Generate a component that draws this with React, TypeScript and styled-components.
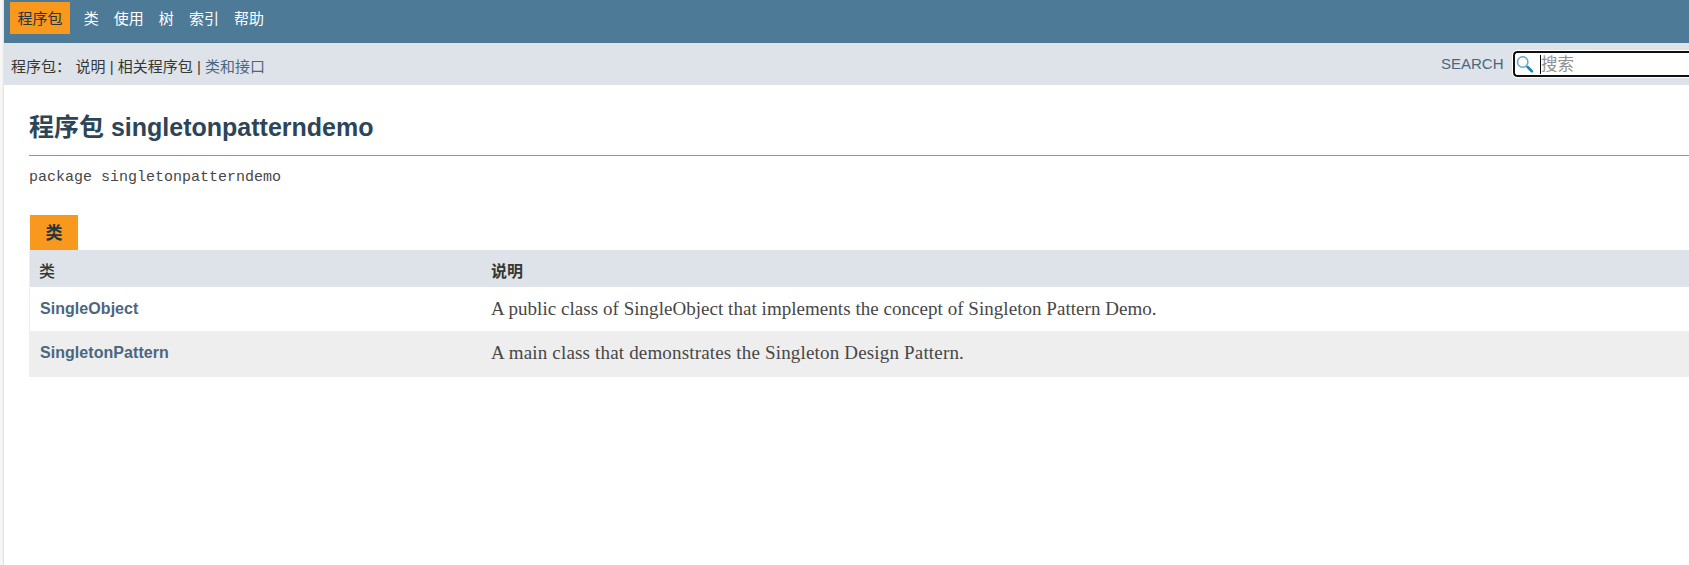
import React from "react";
import styled, { createGlobalStyle } from "styled-components";

const sans = `"Liberation Sans", "Noto Sans CJK SC", sans-serif`;

const GlobalStyle = createGlobalStyle`
  html, body { margin: 0; padding: 0; background: #fff; overflow: hidden; }
  * { box-sizing: border-box; }
  a { text-decoration: none; color: #4a6782; }
`;

const Page = styled.div`
  display: flex;
  width: 100vw;
  height: 100vh;
  overflow: hidden;
  font-family: ${sans};
  color: #353833;
`;

const Edge = styled.div`
  flex: 0 0 4px;
  background: linear-gradient(to right, #f7f7f7 0 2px, #ededed 3px, #dcdcdc 4px);
`;

const Main = styled.main`
  flex: 1;
  min-width: 0;
`;

const TopNav = styled.nav`
  display: flex;
  align-items: flex-start;
  gap: 15px;
  height: 43px;
  padding: 2px 0 0 6px;
  background: #4d7a97;
`;

const NavItem = styled.a<{ $active?: boolean }>`
  height: 32px;
  padding: ${(p) => (p.$active ? "0 7.5px" : "0")};
  margin-right: ${(p) => (p.$active ? "-1.2px" : "0")};
  background: ${(p) => (p.$active ? "#f8981d" : "transparent")};
  color: ${(p) => (p.$active ? "#253441" : "#fff")};
  font-size: 15px;
  line-height: 33px;
`;

const SubNav = styled.div`
  display: flex;
  justify-content: space-between;
  height: 42px;
  background: #dee3e9;
`;

const SubList = styled.div`
  display: flex;
  padding: 3px 0 0 7px;
  font-size: 15px;
  line-height: 42px;
  white-space: pre;
`;

const SubLabel = styled.span`
  width: 64.5px;
`;

const Search = styled.div`
  display: flex;
  flex: 0 0 248px;
  padding-top: 8px;
`;

const SearchLabel = styled.label`
  width: 72px;
  color: #4a6782;
  font-size: 15px;
  line-height: 26px;
`;

const SearchBox = styled.div`
  display: flex;
  align-items: center;
  flex: 1;
  height: 26px;
  padding-left: 1px;
  border: 2px solid #101010;
  border-right: 0;
  border-radius: 4px 0 0 4px;
  outline: 1px solid #fff;
  background: #fff;
`;

const Caret = styled.span`
  width: 1px;
  height: 19px;
  margin-left: 6px;
  background: #000;
`;

const Placeholder = styled.span`
  color: #909090;
  font-size: 16.5px;
  line-height: 20px;
  padding-bottom: 1px;
`;

const Content = styled.section`
  padding: 0 0 0 25px;
`;

const Title = styled.h1`
  height: 71px;
  margin: 0;
  padding-top: 24px;
  border-bottom: 1px solid #949494;
  color: #2c4557;
  font-size: 25px;
  line-height: 37px;
  font-weight: bold;
`;

const Signature = styled.div`
  height: 59px;
  padding-top: 12px;
  font-family: "Liberation Mono", monospace;
  font-size: 15px;
  line-height: 20px;
  color: #474747;
`;

const Caption = styled.div`
  width: 48px;
  height: 35px;
  margin-left: 1px;
  background: #f8981d;
  color: #253441;
  font-size: 17px;
  line-height: 37px;
  font-weight: bold;
  text-align: center;
`;

const Table = styled.div`
  border: solid #eee;
  border-width: 0 0 1px 1px;
`;

const Row = styled.div<{ $kind: "head" | "even" | "odd" }>`
  display: grid;
  grid-template-columns: 452px 1fr;
  height: ${(p) => ({ head: 37, even: 44, odd: 45 })[p.$kind]}px;
  padding-left: 9px;
  background: ${(p) => ({ head: "#dee3e9", even: "#fff", odd: "#eeeeee" })[p.$kind]};
  line-height: ${(p) => (p.$kind === "head" ? 43 : 44)}px;
  font-size: 16px;
`;

const HeadCell = styled.div<{ $strong?: boolean }>`
  font-weight: ${(p) => (p.$strong ? 700 : 500)};
`;

const ClassLink = styled.a`
  padding-left: 1px;
  font-weight: bold;
  font-size: 16px;
  letter-spacing: 0.05px;
`;

const Description = styled.div<{ $spacing: number }>`
  color: #474747;
  font-family: "Liberation Serif", serif;
  font-size: 19px;
  letter-spacing: ${(p) => p.$spacing}px;
  white-space: nowrap;
`;

const SearchIcon = () => (
  <svg width="18" height="18" viewBox="0 0 18 18" fill="none">
    <circle cx="6.7" cy="7" r="5.2" stroke="#62a9cb" strokeWidth="1.5" />
    <path d="M10.3 10.7l1.4 1.5" stroke="#62a9cb" strokeWidth="1.4" />
    <path d="M11.8 12.1l4 4.1" stroke="#1b83bd" strokeWidth="2.7" strokeLinecap="round" />
  </svg>
);

const classes = [
  {
    name: "SingleObject",
    text: "A public class of SingleObject that implements the concept of Singleton Pattern Demo.",
    spacing: 0.04,
  },
  {
    name: "SingletonPattern",
    text: "A main class that demonstrates the Singleton Design Pattern.",
    spacing: 0.17,
  },
];

export default function App() {
  return (
    <Page>
      <GlobalStyle />
      <Edge />
      <Main>
        <TopNav>
          <NavItem $active>程序包</NavItem>
          {["类", "使用", "树", "索引", "帮助"].map((t) => (
            <NavItem key={t}>{t}</NavItem>
          ))}
        </TopNav>
        <SubNav>
          <SubList>
            <SubLabel>程序包：</SubLabel>
            <span>说明 | 相关程序包 | </span>
            <a>类和接口</a>
          </SubList>
          <Search>
            <SearchLabel>SEARCH</SearchLabel>
            <SearchBox>
              <SearchIcon />
              <Caret />
              <Placeholder>搜索</Placeholder>
            </SearchBox>
          </Search>
        </SubNav>
        <Content>
          <Title>程序包 singletonpatterndemo</Title>
          <Signature>package singletonpatterndemo</Signature>
          <Caption>类</Caption>
          <Table>
            <Row $kind="head">
              <HeadCell>类</HeadCell>
              <HeadCell $strong>说明</HeadCell>
            </Row>
            {classes.map(({ name, text, spacing }, i) => (
              <Row key={name} $kind={i % 2 ? "odd" : "even"}>
                <ClassLink>{name}</ClassLink>
                <Description $spacing={spacing}>{text}</Description>
              </Row>
            ))}
          </Table>
        </Content>
      </Main>
    </Page>
  );
}
